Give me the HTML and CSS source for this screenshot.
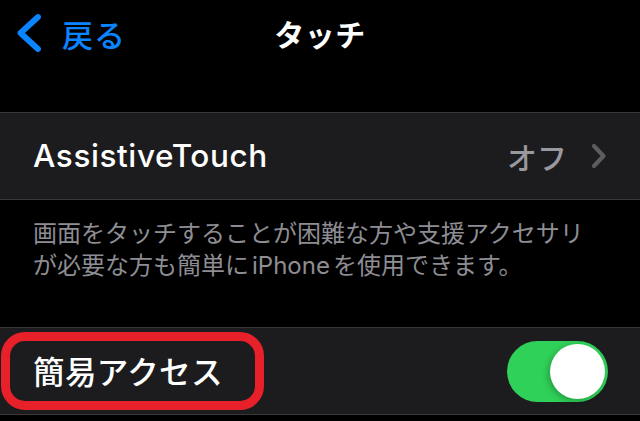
FILE: index.html
```html
<!DOCTYPE html>
<html lang="ja">
<head>
<meta charset="utf-8">
<title>タッチ</title>
<link rel="stylesheet" href="styles.css">
</head>
<body>
<div class="screen">
  <header class="nav">
    <div class="back">
      <svg class="back-chev" width="26" height="40" viewBox="0 0 26 40" aria-hidden="true">
        <path d="M22 4 L4.5 20 L22 36" fill="none" stroke="#0a84ff" stroke-width="5.8" stroke-linecap="round" stroke-linejoin="round"/>
      </svg>
      <span class="back-label">戻る</span>
    </div>
    <h1 class="title">タッチ</h1>
    <div class="nav-spacer"></div>
  </header>

  <section class="group first">
    <div class="cell">
      <span class="cell-label latin">AssistiveTouch</span>
      <span class="cell-value">
        <span class="value-text">オフ</span>
        <svg class="disclosure" width="16" height="26" viewBox="0 0 16 26" aria-hidden="true">
          <path d="M3 3 L12.5 13 L3 23" fill="none" stroke="#5b5b60" stroke-width="4.2" stroke-linecap="round" stroke-linejoin="round"/>
        </svg>
      </span>
    </div>
  </section>
  <p class="footer">画面をタッチすることが困難な方や支援アクセサリ<br>が必要な方も簡単に<span class="latin-inline">iPhone</span>を使用できます。</p>

  <section class="group second">
    <div class="cell">
      <span class="cell-label">簡易アクセス</span>
      <span class="switch on"><span class="knob"></span></span>
      <span class="highlight" aria-hidden="true"></span>
    </div>
  </section>
</div>
</body>
</html>
```

FILE: styles.css
```css
* { box-sizing: border-box; }

html, body {
  margin: 0;
  padding: 0;
  background: #000;
}

body {
  width: 640px;
  height: 421px;
  overflow: hidden;
  font-family: Inter, "Noto Sans CJK JP", "Noto Sans", sans-serif;
  color: #fff;
}

.screen {
  display: flex;
  flex-direction: column;
}

.nav {
  height: 66px;
  display: grid;
  grid-template-columns: 1fr auto 1fr;
  align-items: center;
}

.back {
  display: flex;
  align-items: center;
  gap: 20px;
  padding-left: 16px;
  color: #0a84ff;
}

.back-label {
  font-family: "Noto Sans CJK JP", sans-serif;
  font-size: 31px;
  font-weight: 500;
  line-height: 1;
  letter-spacing: 1px;
}

.title {
  margin: 0;
  font-family: "Noto Sans CJK JP", sans-serif;
  font-size: 30px;
  font-weight: 700;
  line-height: 1;
  letter-spacing: 0.5px;
}

.group {
  background: #1c1c1e;
  border-top: 1px solid #38383a;
  border-bottom: 1px solid #38383a;
}

.group.first { margin-top: 46px; }

.group.second { margin-top: 0; }

.cell {
  position: relative;
  height: 86px;
  display: flex;
  align-items: center;
  justify-content: space-between;
  padding: 0 33px;
}

.cell-label {
  font-family: "Noto Sans CJK JP", sans-serif;
  font-size: 31.5px;
  line-height: 1;
  font-weight: 500;
  letter-spacing: 0.4px;
}

.cell-label.latin {
  font-family: Inter, "Noto Sans", sans-serif;
  font-weight: 500;
  font-size: 31.5px;
  letter-spacing: 0.6px;
}

.cell-value {
  display: flex;
  align-items: center;
  gap: 24px;
}

.value-text {
  font-family: "Noto Sans CJK JP", sans-serif;
  font-size: 30px;
  font-weight: 500;
  line-height: 1;
  color: #98989f;
}

.footer {
  margin: 0;
  height: 127px;
  padding: 16px 33px 0;
  font-family: "Noto Sans CJK JP", sans-serif;
  font-size: 24px;
  line-height: 32px;
  color: #8d8d93;
}

.latin-inline {
  font-family: Inter, sans-serif;
  margin: 0 3px;
}

.switch {
  width: 101px;
  height: 61px;
  border-radius: 31px;
  background: #30d158;
  display: flex;
  align-items: center;
  justify-content: flex-end;
  padding: 0 3px;
  margin-left: auto;
  transform: translateX(1px);
}

.knob {
  width: 55px;
  height: 55px;
  border-radius: 50%;
  background: #fff;
  box-shadow: -2px 2px 6px rgba(0, 0, 0, 0.25);
}

.highlight {
  position: absolute;
  left: 1px;
  top: 4px;
  width: 263px;
  height: 78px;
  border: 9px solid #e8202a;
  border-radius: 24px;
  pointer-events: none;
}
```
